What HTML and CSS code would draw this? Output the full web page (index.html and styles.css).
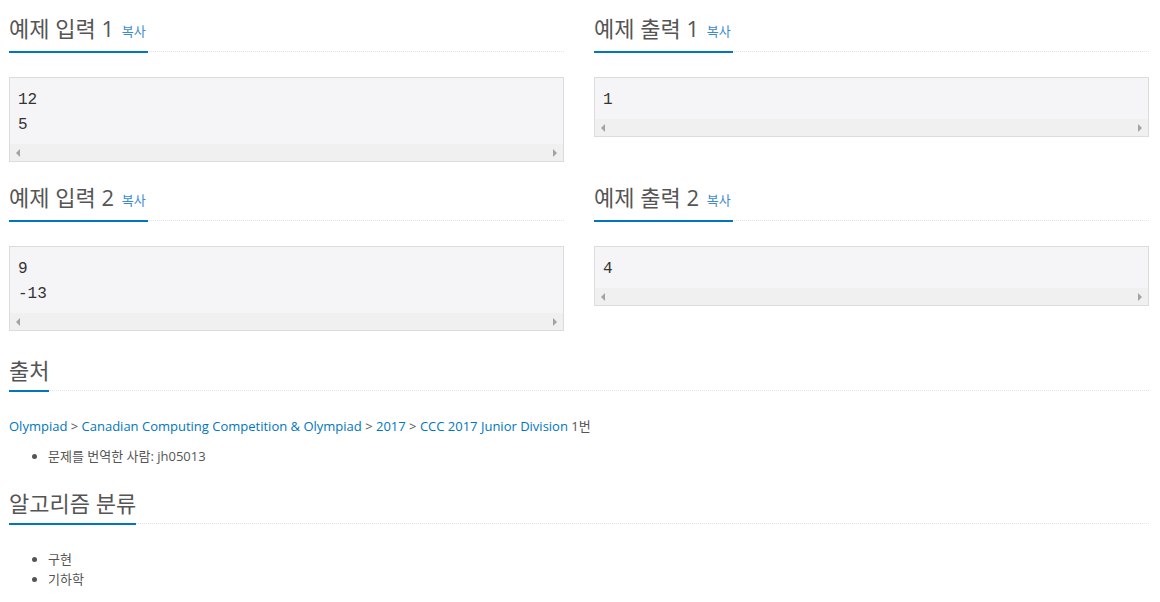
FILE: index.html
```html
<!DOCTYPE html>
<html lang="ko">
<head>
<meta charset="utf-8">
<link rel="stylesheet" href="styles.css">
</head>
<body>
<div class="page">
  <div class="samples">
    <section class="sample">
      <div class="headline"><h2>예제 입력 1 <span class="copy">복사</span></h2></div>
      <div class="pre"><div class="code">12
5</div><div class="scrollbar"><span class="arr left"></span><span class="arr right"></span></div></div>
    </section>
    <section class="sample">
      <div class="headline"><h2>예제 출력 1 <span class="copy">복사</span></h2></div>
      <div class="pre"><div class="code">1</div><div class="scrollbar"><span class="arr left"></span><span class="arr right"></span></div></div>
    </section>
    <section class="sample">
      <div class="headline"><h2>예제 입력 2 <span class="copy">복사</span></h2></div>
      <div class="pre"><div class="code">9
-13</div><div class="scrollbar"><span class="arr left"></span><span class="arr right"></span></div></div>
    </section>
    <section class="sample">
      <div class="headline"><h2>예제 출력 2 <span class="copy">복사</span></h2></div>
      <div class="pre"><div class="code">4</div><div class="scrollbar"><span class="arr left"></span><span class="arr right"></span></div></div>
    </section>
  </div>

  <section class="full source">
    <div class="headline"><h2>출처</h2></div>
    <p class="crumbs"><a href="#">Olympiad</a> &gt; <a href="#">Canadian Computing Competition &amp; Olympiad</a> &gt; <a href="#">2017</a> &gt; <a href="#">CCC 2017 Junior Division</a> 1번</p>
    <ul class="list">
      <li>문제를 번역한 사람: jh05013</li>
    </ul>
  </section>

  <section class="full tags">
    <div class="headline"><h2>알고리즘 분류</h2></div>
    <ul class="list">
      <li>구현</li>
      <li>기하학</li>
    </ul>
  </section>
</div>
</body>
</html>
```

FILE: styles.css
```css
html, body {
  margin: 0;
  padding: 0;
  background: #fff;
}
body {
  font-family: "Open Sans", "Noto Sans CJK KR", sans-serif;
  font-size: 13px;
  line-height: 20px;
  color: #555;
}
.page {
  width: 1140px;
  padding-left: 9px;
}
.samples {
  display: grid;
  grid-template-columns: 555px 555px;
  column-gap: 30px;
  align-items: start;
}
.sample {
  padding-top: 12px;
  padding-bottom: 7px;
}
.headline {
  display: flex;
  border-bottom: 1px dotted #dfe4ea;
  margin-bottom: 25px;
}
.headline h2 {
  margin: 0 0 -2px 0;
  font-family: "Open Sans", "Noto Sans CJK KR", sans-serif;
  font-weight: 400;
  font-size: 22px;
  line-height: 33px;
  color: #555;
  padding-bottom: 3px;
  border-bottom: 2px solid #0076c0;
}
.copy {
  font-size: 13px;
  color: #3c8ad0;
  margin-left: 2px;
  margin-right: 2px;
  vertical-align: 1px;
}
.pre {
  border: 1px solid #dcdcdf;
  background: #f5f5f7;
}
.code {
  white-space: pre;
  font-family: "Liberation Mono", monospace;
  font-size: 16px;
  line-height: 25px;
  color: #333;
  padding: 10px 8px 6px 8px;
}
.scrollbar {
  height: 17px;
  background: #f0f0f0;
  display: flex;
  justify-content: space-between;
  align-items: center;
  padding: 0 6px;
}
.arr {
  width: 0;
  height: 0;
  border-top: 4px solid transparent;
  border-bottom: 4px solid transparent;
}
.arr.left { border-right: 4px solid #a3a3a3; }
.arr.right { border-left: 4px solid #a3a3a3; }

.source {
  padding-top: 16px;
}
.tags {
  padding-top: 14px;
}
.crumbs {
  margin: 0 0 10px 0;
}
.crumbs a {
  color: #0076c0;
  text-decoration: none;
}
.list {
  margin: 0 0 10px 0;
  padding-left: 39px;
}
.source .list {
  margin-bottom: 7px;
}
```
